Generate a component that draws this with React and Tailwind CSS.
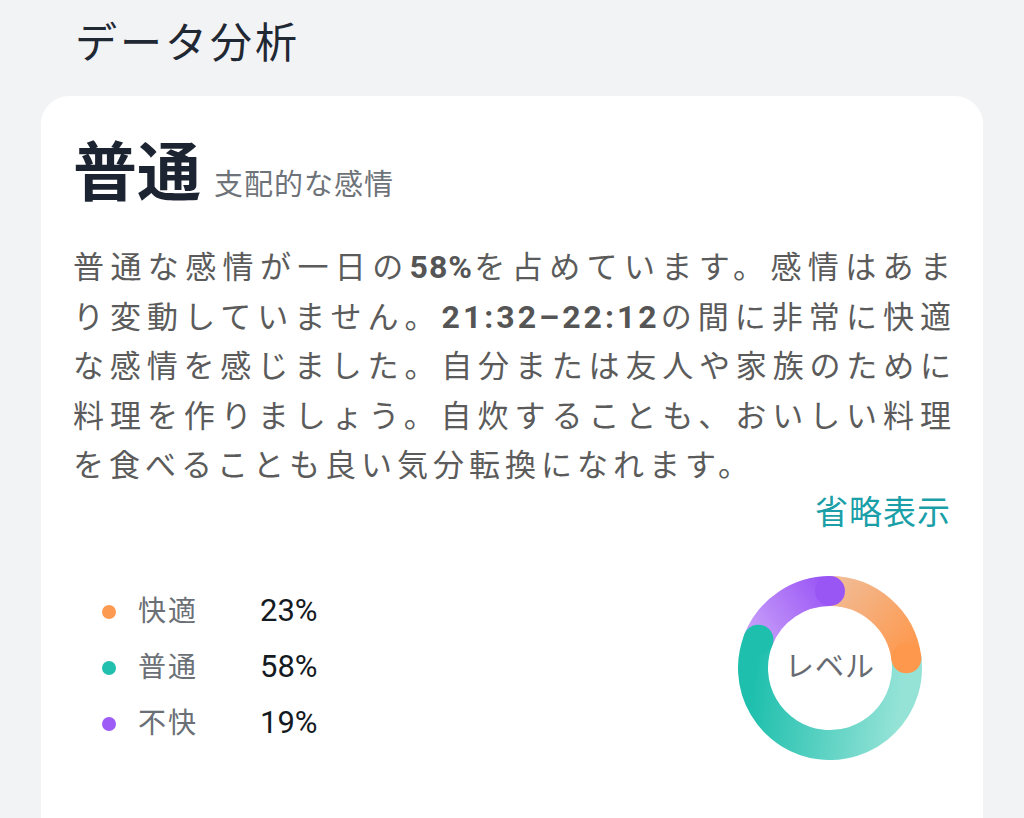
import React from "react";

const C = 92;
const R = 77;
const pt = (deg) => {
  const a = (deg * Math.PI) / 180;
  return [C + R * Math.sin(a), C - R * Math.cos(a)];
};
const arc = (a0, a1) => {
  const [x0, y0] = pt(a0);
  const [x1, y1] = pt(a1);
  const large = a1 - a0 > 180 ? 1 : 0;
  return `M ${x0} ${y0} A ${R} ${R} 0 ${large} 1 ${x1} ${y1}`;
};

const segs = [
  { id: "gO", a0: 0, a1: 82.8, c0: "#f1bb94", c1: "#fe984d" },
  { id: "gT", a0: 82.8, a1: 291.6, c0: "#95e3d7", c1: "#1ebfad" },
  { id: "gP", a0: 291.6, a1: 360, c0: "#c69cf9", c1: "#9a56f5" },
];

function Donut() {
  return (
    <div className="relative mr-[29px] h-[184px] w-[184px]">
      <svg width="184" height="184" viewBox="0 0 184 184">
        <defs>
          {segs.map((s) => {
            const [x0, y0] = pt(s.a0);
            const [x1, y1] = pt(s.a1);
            return (
              <linearGradient key={s.id} id={s.id} gradientUnits="userSpaceOnUse" x1={x0} y1={y0} x2={x1} y2={y1}>
                <stop offset="0" stopColor={s.c0} />
                <stop offset="1" stopColor={s.c1} />
              </linearGradient>
            );
          })}
        </defs>
        {segs.map((s) => (
          <path key={s.id} d={arc(s.a0, s.a1 === 360 ? 359.99 : s.a1)} fill="none" stroke={`url(#${s.id})`} strokeWidth="30" />
        ))}
        {segs.map((s) => {
          const [x, y] = pt(s.a1);
          return <circle key={s.id + "c"} cx={x} cy={y} r="15" fill={s.c1} />;
        })}
      </svg>
      <div className="absolute inset-0 flex items-center justify-center text-[29px] tracking-[1px] text-[#676b71]">
        レベル
      </div>
    </div>
  );
}

const legend = [
  { label: "快適", value: "23%", dot: "bg-[#fd9a52]" },
  { label: "普通", value: "58%", dot: "bg-[#20bfae]" },
  { label: "不快", value: "19%", dot: "bg-[#9d5cf6]" },
];

export default function App() {
  return (
    <div className="min-h-[818px] bg-[#f2f3f5] px-[41px] font-['Roboto','Noto_Sans_CJK_JP',sans-serif]">
      <h1 className="pl-[34px] pt-[16px] text-[42px] font-normal leading-[56px] tracking-[3px] text-[#1f2833]">
        データ分析
      </h1>
      <section className="mt-[24px] min-h-[760px] rounded-t-[28px] bg-white px-8 pt-[46px] pb-[100px]">
        <div className="flex items-baseline gap-[13px]">
          <span className="text-[64px] font-bold leading-none text-[#1b2430]">普通</span>
          <span className="text-[29px] leading-none tracking-[1px] text-[#6e7379]">支配的な感情</span>
        </div>
        <p className="-mr-[5px] mt-[37px] text-justify text-[31px] leading-[49.5px] tracking-[5px] text-[#5b5b5b]">
          普通な感情が一日の<b className="text-[32px] font-bold tracking-[1px] text-[#555]">58%</b>を占めています。感情はあまり変動していません。<b className="text-[32px] font-bold tracking-[3px] text-[#555]">21:32–22:12</b>の間に非常に快適な感情を感じました。自分または友人や家族のために料理を作りましょう。自炊することも、おいしい料理を食べることも良い気分転換になれます。
        </p>
        <div className="text-right text-[33px] leading-[44px] tracking-[1px] text-[#1a9fa8]">省略表示</div>
        <div className="mt-[41px] flex items-center justify-between">
          <ul className="flex flex-col pl-[29px]">
            {legend.map((l) => (
              <li key={l.label} className="flex h-[56px] items-center">
                <span className={`h-[14px] w-[14px] rounded-full ${l.dot}`} />
                <span className="ml-[22px] w-[122px] text-[28px] tracking-[2px] text-[#6b7076]">{l.label}</span>
                <span className="text-[31px] text-[#141a22]">{l.value}</span>
              </li>
            ))}
          </ul>
          <Donut />
        </div>
      </section>
    </div>
  );
}
